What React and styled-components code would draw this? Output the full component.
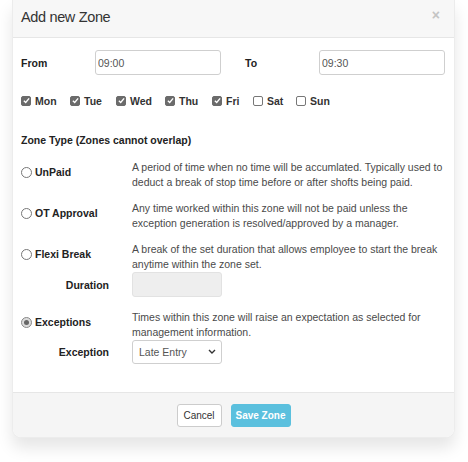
import styled, { createGlobalStyle } from "styled-components";

const GlobalStyle = createGlobalStyle`
  html, body {
    margin: 0;
    padding: 0;
    background: #ffffff;
    font-family: "Liberation Sans", Arial, sans-serif;
  }
`;

const Page = styled.div`
  width: 468px;
  height: 462px;
  padding: 0 12px;
  box-sizing: border-box;
`;

const Modal = styled.div`
  width: 443px;
  background: #ffffff;
  border: 1px solid #ececec;
  border-top: none;
  border-radius: 0 0 9px 9px;
  box-shadow: 0 10px 16px rgba(0, 0, 0, 0.1);
  overflow: hidden;
  box-sizing: border-box;
`;

const Header = styled.div`
  height: 38px;
  background: #f7f7f7;
  border-bottom: 1px solid #e6e6e6;
  display: flex;
  align-items: center;
  justify-content: space-between;
  padding: 0 14px 4px 8px;
  box-sizing: border-box;
`;

const Title = styled.h2`
  margin: 0;
  font-size: 14.5px;
  letter-spacing: -0.35px;
  font-weight: 400;
  color: #333;
`;

const Close = styled.span`
  font-size: 14px;
  color: #c4c4c4;
  font-weight: 700;
  margin-top: -4px;
`;

const Body = styled.div`
  padding: 12px 9px 28px 8px;
`;

const TimeRow = styled.div`
  display: grid;
  grid-template-columns: 74px 126px 24px 74px 126px;
  align-items: center;
`;

const Label = styled.span`
  font-size: 10.5px;
  font-weight: 700;
  color: #222;
  text-align: ${(p) => (p.$right ? "right" : "left")};
  padding-right: ${(p) => (p.$right ? "23px" : "0")};
`;

const Input = styled.input`
  height: 25px;
  box-sizing: border-box;
  border: 1px solid ${(p) => (p.disabled ? "#e2e2e2" : "#cfcfcf")};
  border-radius: 3px;
  padding: 0 2px;
  font-family: inherit;
  font-size: 10.5px;
  color: #555;
  background: ${(p) => (p.disabled ? "#eeeeee" : "#ffffff")};
  width: ${(p) => p.$w || "126px"};
  outline: none;
`;

const Days = styled.div`
  display: flex;
  margin-top: 19px;
  height: 13px;
  align-items: center;
`;

const Day = styled.label`
  display: flex;
  align-items: center;
  gap: 4px;
  font-size: 10.5px;
  font-weight: 700;
  color: #333;
  width: ${(p) => p.$w}px;
`;

const Box = styled.span`
  width: 10px;
  height: 10px;
  box-sizing: border-box;
  border-radius: 2px;
  border: 1px solid ${(p) => (p.$on ? "#6b6b6b" : "#777")};
  background: ${(p) => (p.$on ? "#6b6b6b" : "#fff")};
  display: flex;
  align-items: center;
  justify-content: center;
`;

const Heading = styled.div`
  margin-top: 27px;
  font-size: 10.5px;
  font-weight: 700;
  color: #222;
`;

const Option = styled.div`
  display: grid;
  grid-template-columns: 111px 1fr;
  margin-top: ${(p) => p.$mt}px;
`;

const RadioLabel = styled.label`
  display: flex;
  align-items: center;
  gap: 3px;
  font-size: 10.5px;
  font-weight: 700;
  color: #222;
  padding-bottom: 6px;
`;

const Radio = styled.span`
  width: 11px;
  height: 11px;
  box-sizing: border-box;
  border-radius: 50%;
  border: 1px solid #777;
  background: #fff;
  display: flex;
  align-items: center;
  justify-content: center;
  &::after {
    content: "";
    width: 5px;
    height: 5px;
    border-radius: 50%;
    background: ${(p) => (p.$on ? "#666" : "transparent")};
  }
  ${(p) => p.$on && "background: #dcdcdc; border-color: #888;"}
`;

const Desc = styled.p`
  margin: 0;
  font-size: 10.5px;
  line-height: 15px;
  color: #4a4a4a;
`;

const SubRow = styled.div`
  display: grid;
  grid-template-columns: 111px 1fr;
  align-items: center;
`;

const SelectWrap = styled.div`
  position: relative;
  width: 90px;
`;

const Select = styled.select`
  appearance: none;
  width: 90px;
  height: 24px;
  box-sizing: border-box;
  border: 1px solid #cfcfcf;
  border-radius: 3px;
  background: #fff;
  padding: 0 6px;
  font-family: inherit;
  font-size: 10.5px;
  color: #555;
`;

const Chevron = styled.svg`
  position: absolute;
  right: 6px;
  top: 9px;
  pointer-events: none;
`;

const Footer = styled.div`
  height: 45px;
  background: #f5f5f5;
  border-top: 1px solid #e6e6e6;
  display: flex;
  align-items: center;
  justify-content: center;
  gap: 9px;
  box-sizing: border-box;
`;

const Button = styled.button`
  height: 23px;
  width: ${(p) => (p.$primary ? "60px" : "45px")};
  padding: 0;
  border-radius: 3px;
  font-family: inherit;
  font-size: 10px;
  font-weight: ${(p) => (p.$primary ? 700 : 400)};
  color: ${(p) => (p.$primary ? "#fff" : "#333")};
  background: ${(p) => (p.$primary ? "#5bc0de" : "#fff")};
  border: 1px solid ${(p) => (p.$primary ? "#5bc0de" : "#cccccc")};
`;

const Check = () => (
  <svg width="7" height="7" viewBox="0 0 8 8">
    <path d="M1 4.2 L3.1 6.2 L7 1.6" fill="none" stroke="#fff" strokeWidth="1.6" />
  </svg>
);

const days = [
  { name: "Mon", on: true, w: 49 },
  { name: "Tue", on: true, w: 46 },
  { name: "Wed", on: true, w: 49 },
  { name: "Thu", on: true, w: 47 },
  { name: "Fri", on: true, w: 41 },
  { name: "Sat", on: false, w: 43 },
  { name: "Sun", on: false, w: 40 },
];

const App = () => {
  return (
    <>
      <GlobalStyle />
      <Page>
        <Modal>
          <Header>
            <Title>Add new Zone</Title>
            <Close>×</Close>
          </Header>
          <Body>
            <TimeRow>
              <Label>From</Label>
              <Input defaultValue="09:00" />
              <span />
              <Label>To</Label>
              <Input defaultValue="09:30" />
            </TimeRow>

            <Days>
              {days.map((d) => (
                <Day key={d.name} $w={d.w}>
                  <Box $on={d.on}>{d.on && <Check />}</Box>
                  {d.name}
                </Day>
              ))}
            </Days>

            <Heading>Zone Type (Zones cannot overlap)</Heading>

            <Option $mt={14}>
              <RadioLabel>
                <Radio />
                UnPaid
              </RadioLabel>
              <Desc>
                A period of time when no time will be accumlated. Typically used to
                deduct a break of stop time before or after shofts being paid.
              </Desc>
            </Option>

            <Option $mt={11}>
              <RadioLabel>
                <Radio />
                OT Approval
              </RadioLabel>
              <Desc>
                Any time worked within this zone will not be paid unless the
                exception generation is resolved/approved by a manager.
              </Desc>
            </Option>

            <Option $mt={11}>
              <RadioLabel>
                <Radio />
                Flexi Break
              </RadioLabel>
              <Desc>
                A break of the set duration that allows employee to start the break
                anytime within the zone set.
              </Desc>
            </Option>
            <SubRow>
              <Label $right>Duration</Label>
              <Input disabled $w="90px" />
            </SubRow>

            <Option $mt={13}>
              <RadioLabel>
                <Radio $on />
                Exceptions
              </RadioLabel>
              <Desc>
                Times within this zone will raise an expectation as selected for
                management information.
              </Desc>
            </Option>
            <SubRow>
              <Label $right>Exception</Label>
              <SelectWrap>
                <Select defaultValue="late">
                  <option value="late">Late Entry</option>
                  <option value="early">Early Exit</option>
                </Select>
                <Chevron width="8" height="6" viewBox="0 0 8 6">
                  <path d="M1 1 L4 4 L7 1" fill="none" stroke="#333" strokeWidth="1.4" />
                </Chevron>
              </SelectWrap>
            </SubRow>
          </Body>
          <Footer>
            <Button>Cancel</Button>
            <Button $primary>Save Zone</Button>
          </Footer>
        </Modal>
      </Page>
    </>
  );
};

export default App;
